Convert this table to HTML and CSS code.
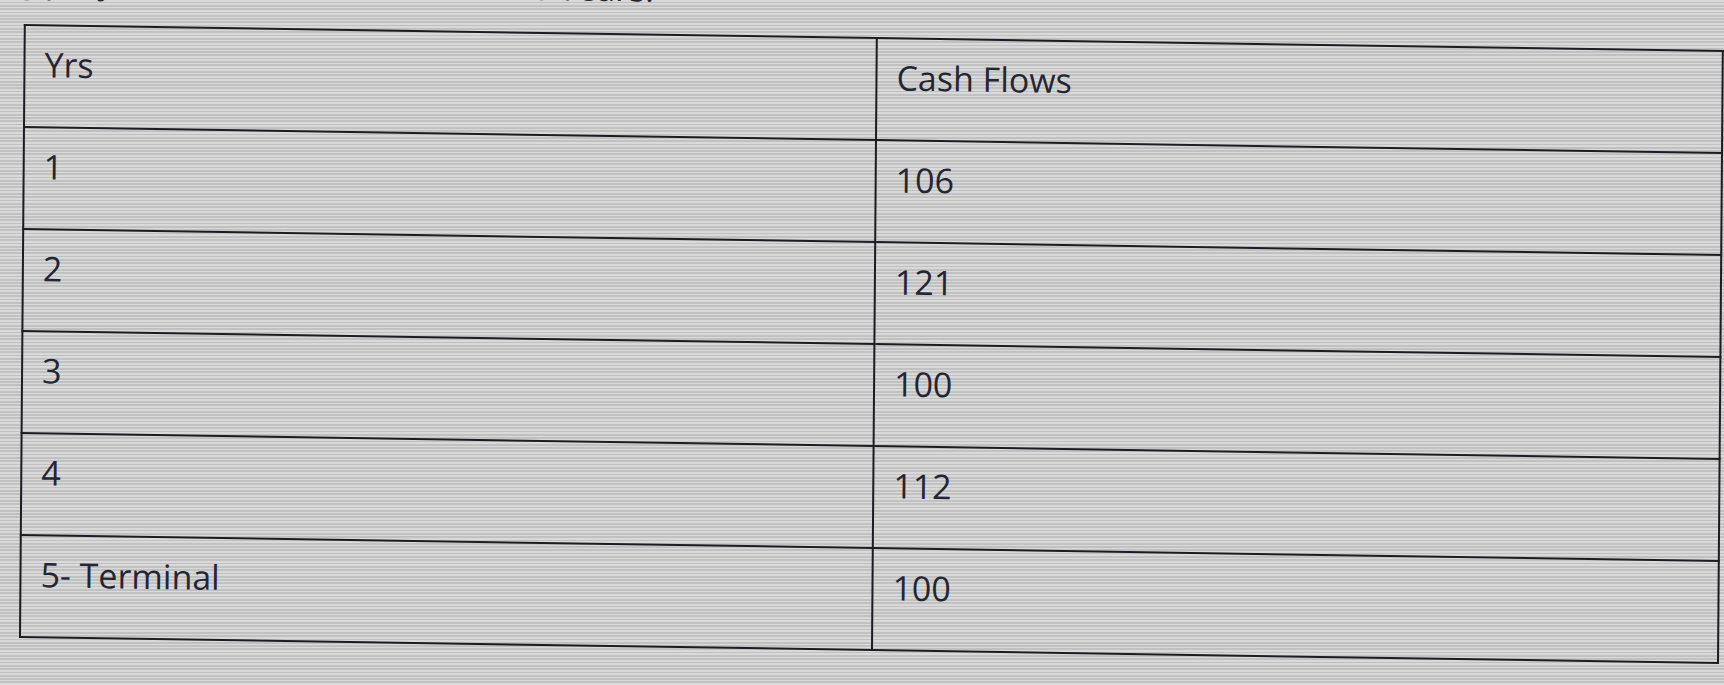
FILE: index.html
```html
<!DOCTYPE html>
<html lang="en">
<head>
<meta charset="utf-8">
<title>Cash Flows</title>
<link rel="stylesheet" href="styles.css">
</head>
<body>
<div class="page">
  <div class="sheet">
    <div class="caption"><span>Use the following projected cash flows for the five Years.</span></div>
    <table class="cf-table">
      <colgroup>
        <col class="col-yrs">
        <col class="col-cf">
      </colgroup>
      <tr><td>Yrs</td><td>Cash Flows</td></tr>
      <tr><td>1</td><td>106</td></tr>
      <tr><td>2</td><td>121</td></tr>
      <tr><td>3</td><td>100</td></tr>
      <tr><td>4</td><td>112</td></tr>
      <tr><td>5- Terminal</td><td>100</td></tr>
    </table>
  </div>
</div>
</body>
</html>
```

FILE: styles.css
```css
html, body {
  margin: 0;
  padding: 0;
}
body {
  width: 1724px;
  height: 685px;
  overflow: hidden;
  background-color: #cdcdcd;
  background-image: repeating-linear-gradient(to bottom, #d9d9d9 0px, #d9d9d9 1.6px, #c1c1c1 1.6px, #c1c1c1 3.3px);
  font-family: "Open Sans", "Noto Sans", sans-serif;
  color: #232632;
}
.page {
  padding-left: 24px;
}
.sheet {
  display: flow-root;
  width: 1698px;
  transform-origin: 0 0;
  transform: skewY(0.88deg) skewX(-0.45deg);
}
.caption {
  display: flex;
  justify-content: flex-end;
  width: 630px;
  font-size: 34px;
  line-height: 1px;
  height: 1px;
  margin-top: -21px;
  margin-bottom: 44px;
  white-space: nowrap;
}
.cf-table {
  border-collapse: collapse;
  width: 1698px;
  table-layout: fixed;
  font-size: 34px;
}
.col-yrs {
  width: 852px;
}
.col-cf {
  width: 846px;
}
.cf-table td {
  border: 2.5px solid #1c1d22;
  padding: 15px 19px 39px 19px;
  line-height: 46px;
  vertical-align: top;
  white-space: nowrap;
}
```
